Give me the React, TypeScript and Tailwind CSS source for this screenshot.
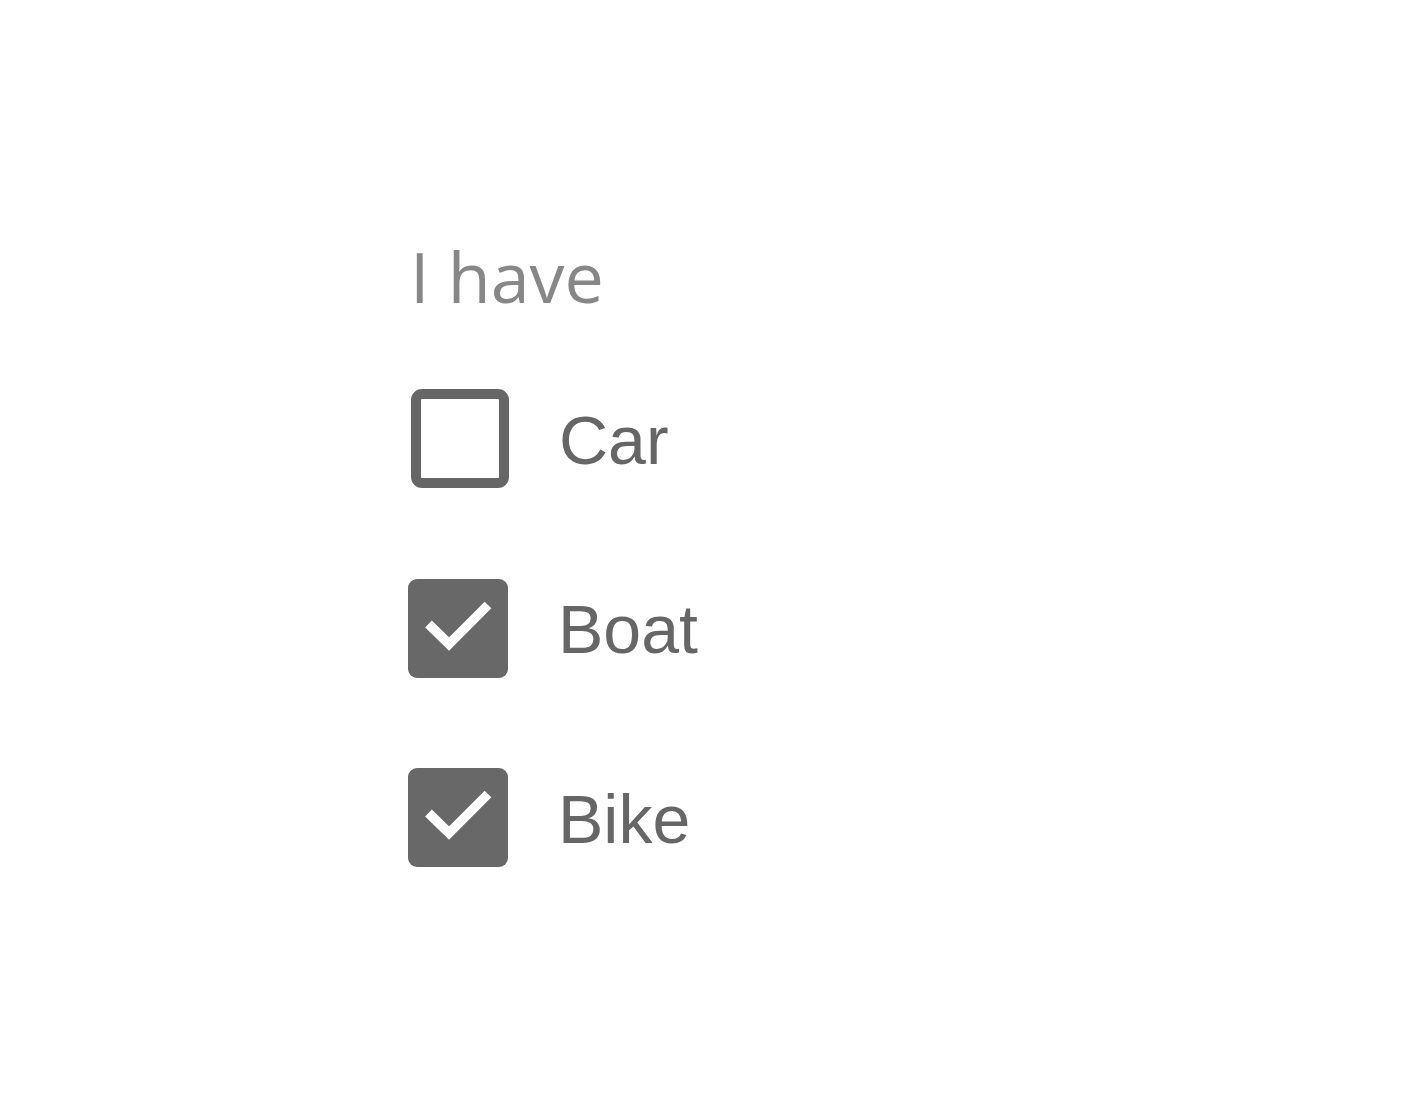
import React, { useState } from "react";

interface Option {
  id: string;
  label: string;
  checked: boolean;
}

const initial: Option[] = [
  { id: "car", label: "Car", checked: false },
  { id: "boat", label: "Boat", checked: true },
  { id: "bike", label: "Bike", checked: true },
];

function Box({ checked }: { checked: boolean }) {
  if (!checked) {
    return (
      <span className="ml-[3px] block h-[99px] w-[98px] shrink-0 rounded-[11px] border-[10px] border-[#666666] bg-white" />
    );
  }
  return (
    <span className="block h-[99px] w-[100px] shrink-0 rounded-[9px] bg-[#686868]">
      <svg viewBox="0 0 100 99" className="h-full w-full" fill="none">
        <polyline
          points="20.5,45 41,65 80,26"
          stroke="#ffffff"
          strokeWidth="9.5"
          strokeLinecap="butt"
          strokeLinejoin="miter"
        />
      </svg>
    </span>
  );
}

export default function App() {
  const [items, setItems] = useState(initial);

  const toggle = (id: string) =>
    setItems((prev) => prev.map((i) => (i.id === id ? { ...i, checked: !i.checked } : i)));

  return (
    <div className="min-h-[1102px] w-full bg-white">
      <div className="flex flex-col pl-[408px] pt-[241px]">
        <h1
          className="ml-[2px] text-[70px] leading-[70px] text-[#878787]"
          style={{ fontFamily: '"Open Sans", sans-serif' }}
        >
          I have
        </h1>
        <div className="mt-[78px] flex flex-col gap-[90px]">
          {items.map((item) => (
            <label
              key={item.id}
              onClick={() => toggle(item.id)}
              className="flex h-[99.5px] cursor-pointer items-center gap-[50px]"
            >
              <Box checked={item.checked} />
              <span
                className="pt-[2px] text-[68px] leading-none text-[#666666]"
                style={{ fontFamily: '"Liberation Sans", Arial, sans-serif' }}
              >
                {item.label}
              </span>
            </label>
          ))}
        </div>
      </div>
    </div>
  );
}
